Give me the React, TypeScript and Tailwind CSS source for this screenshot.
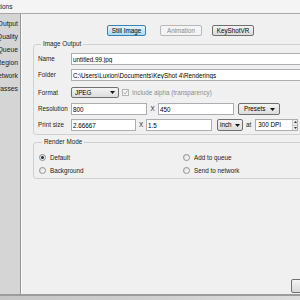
import React from "react";

function Arrow() {
  return (
    <svg width="5" height="3" viewBox="0 0 5 3" className="shrink-0">
      <polygon points="0,0 5,0 2.5,3" fill="#151515" />
    </svg>
  );
}

function Field({ value, className }: { value: string; className: string }) {
  return (
    <input
      readOnly
      value={value}
      className={`h-[12px] shrink-0 border border-[#abadb3] bg-white px-[1px] text-black outline-none ${className}`}
    />
  );
}

function Combo({ label, className }: { label: string; className: string }) {
  return (
    <div
      className={`flex shrink-0 items-center justify-between rounded-[2px] border border-[#707070] bg-linear-to-b from-[#f3f3f3] to-[#dcdcdc] text-black ${className}`}
    >
      <span>{label}</span>
      <Arrow />
    </div>
  );
}

function Radio({ checked, label }: { checked?: boolean; label: string }) {
  return (
    <div className="flex h-[9px] items-center">
      <span className="flex h-[7px] w-[7px] items-center justify-center rounded-full border border-[#8e8f8f] bg-linear-to-br from-[#dcdcdc] to-white">
        {checked && <span className="h-[3px] w-[3px] rounded-full bg-[#1d2b3a]" />}
      </span>
      <span className="ml-[4px]">{label}</span>
    </div>
  );
}

export default function App() {
  const sections = ["Output", "Quality", "Queue", "Region", "Network", "Passes"];

  return (
    <div className="flex h-[300px] w-[300px] flex-col overflow-hidden bg-[#f0f0f0] font-['Liberation_Sans',Arial,sans-serif] text-[6.3px] leading-[8px] text-[#1b1b1b]">
      {/* window title strip */}
      <div className="flex h-[14px] shrink-0 items-center border-b border-[#a8a8a8] bg-[#f4f4f4] text-[6.5px]">
        <span className="-ml-[10px] whitespace-nowrap">Options</span>
      </div>

      <div className="flex min-h-0 flex-1">
        {/* section list */}
        <div className="flex w-[21px] shrink-0 flex-col items-end overflow-hidden border-r border-[#939393] bg-[#d5d5d5] pr-[2px] pt-[3px] text-[6.8px]">
          {sections.map((s) => (
            <div key={s} className="h-[13px] whitespace-nowrap leading-[13px]">
              {s}
            </div>
          ))}
        </div>

        {/* settings */}
        <div className="flex min-w-0 flex-1 flex-col border-l border-[#fbfbfb]">
          <div className="flex pl-[85px] pt-[11px]">
            <div className="flex h-[11px] w-[39px] items-center justify-center rounded-[2px] border border-[#3c7fb1] bg-linear-to-b from-[#e3f4fc] to-[#a9daf4] text-black">
              Still Image
            </div>
            <div className="ml-[14px] flex h-[11px] w-[42px] items-center justify-center rounded-[2px] border border-[#b5b9bc] bg-[#f4f4f4] text-[#8a8a8a]">
              Animation
            </div>
            <div className="ml-[10px] flex h-[11px] w-[42px] items-center justify-center rounded-[2px] border border-[#707070] bg-linear-to-b from-[#f4f4f4] to-[#dadada] text-black">
              KeyShotVR
            </div>
          </div>

          <fieldset className="ml-[11px] mt-[4px] w-[300px] shrink-0 rounded-[3px] border border-[#d0d0d0] pb-[3px] pl-[4px] pt-[5px]">
            <legend className="ml-[3px] px-[2px] leading-[8px]">Image Output</legend>

            <div className="flex items-center">
              <span className="w-[33px] shrink-0">Name</span>
              <Field value="untitled.99.jpg" className="w-[250px]" />
            </div>

            <div className="mt-[4px] flex items-center">
              <span className="w-[33px] shrink-0">Folder</span>
              <Field value="C:\Users\Luxion\Documents\KeyShot 4\Renderings" className="w-[250px]" />
            </div>

            <div className="mt-[6px] flex items-center">
              <span className="w-[33px] shrink-0">Format</span>
              <Combo label="JPEG" className="h-[11px] w-[48px] pl-[3px] pr-[3px]" />
              <span className="ml-[3px] flex h-[7px] w-[7px] items-center justify-center border border-[#b6b6b6] bg-[#f5f5f5]">
                <svg width="5" height="5" viewBox="0 0 5 5">
                  <path d="M0.6 2.6 L2 4 L4.5 0.6" fill="none" stroke="#a8a8a8" strokeWidth="0.9" />
                </svg>
              </span>
              <span className="ml-[3px] whitespace-nowrap text-[#8d8d8d]">Include alpha (transparency)</span>
            </div>

            <div className="mt-[5px] flex items-center">
              <span className="w-[33px] shrink-0">Resolution</span>
              <Field value="800" className="w-[76px]" />
              <span className="w-[11px] shrink-0 text-center">X</span>
              <Field value="450" className="w-[76px]" />
              <Combo label="Presets" className="ml-[4px] h-[12px] w-[42px] pl-[5px] pr-[4px]" />
            </div>

            <div className="mt-[4px] flex items-center">
              <span className="w-[33px] shrink-0">Print size</span>
              <Field value="2.66667" className="w-[65px]" />
              <span className="w-[10px] shrink-0 text-center">X</span>
              <Field value="1.5" className="w-[66px]" />
              <Combo label="inch" className="ml-[5px] h-[12px] w-[26px] pl-[2px] pr-[2px]" />
              <span className="ml-[3px]">at</span>
              <div className="ml-[4px] flex h-[12px] w-[43px] shrink-0 items-center justify-between border border-[#abadb3] bg-white pl-[2px] text-black">
                <span>300 DPI</span>
                <div className="flex h-full w-[5px] flex-col border-l border-[#c8c8c8] bg-[#ececec]">
                  <div className="flex flex-1 items-center justify-center border-b border-[#c8c8c8]">
                    <svg width="3" height="2" viewBox="0 0 3 2">
                      <polygon points="0,2 3,2 1.5,0" fill="#333" />
                    </svg>
                  </div>
                  <div className="flex flex-1 items-center justify-center">
                    <svg width="3" height="2" viewBox="0 0 3 2">
                      <polygon points="0,0 3,0 1.5,2" fill="#333" />
                    </svg>
                  </div>
                </div>
              </div>
            </div>
          </fieldset>

          <fieldset className="ml-[11px] mt-[3px] w-[300px] shrink-0 rounded-[3px] border border-[#d0d0d0] pb-[3px] pl-[5px] pt-[7px]">
            <legend className="ml-[3px] px-[2px] leading-[8px]">Render Mode</legend>
            <div className="grid grid-cols-[144px_1fr] gap-y-[4px]">
              <Radio checked label="Default" />
              <Radio label="Add to queue" />
              <Radio label="Background" />
              <Radio label="Send to network" />
            </div>
          </fieldset>

          <div className="flex-1" />

          <div className="mb-[1px] flex">
            <div className="ml-[269px] h-[14px] w-[50px] shrink-0 rounded-[2px] border border-[#707070] bg-linear-to-b from-[#f4f4f4] to-[#dadada]" />
          </div>
        </div>
      </div>

      {/* bottom frame */}
      <div className="h-[6px] shrink-0 border-t-2 border-[#9c9c9c] bg-linear-to-r from-[#c6c6c6] via-[#cfcfcf] to-[#dedede]" />
    </div>
  );
}
